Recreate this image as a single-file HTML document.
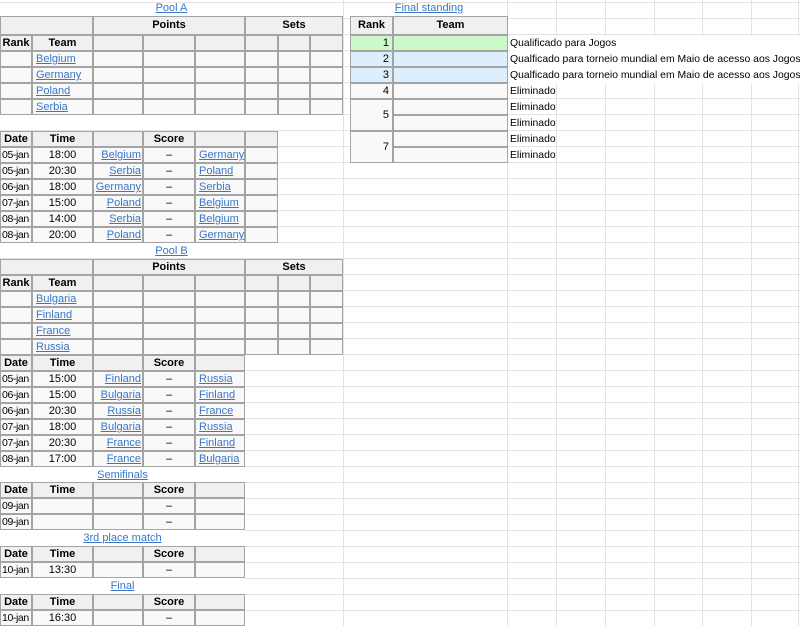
<!DOCTYPE html>
<html><head><meta charset="utf-8"><style>
body{margin:0;width:800px;height:626px;position:relative;overflow:hidden;background-color:#fff;
background-image:repeating-linear-gradient(to bottom,transparent 0,transparent 2px,#e3e3e3 2px,#e3e3e3 3px,transparent 3px,transparent 16px),
linear-gradient(to right,transparent 343px,#e3e3e3 343px,#e3e3e3 344px,transparent 344px,transparent 507px,#e3e3e3 507px,#e3e3e3 508px,transparent 508px,transparent 556px,#e3e3e3 556px,#e3e3e3 557px,transparent 557px,transparent 605px,#e3e3e3 605px,#e3e3e3 606px,transparent 606px,transparent 654px,#e3e3e3 654px,#e3e3e3 655px,transparent 655px,transparent 702px,#e3e3e3 702px,#e3e3e3 703px,transparent 703px,transparent 751px,#e3e3e3 751px,#e3e3e3 752px,transparent 752px,transparent 798px,#e3e3e3 798px,#e3e3e3 799px,transparent 799px);
font-family:"Liberation Sans",Arial,sans-serif;font-size:11px;color:#000}
div{position:absolute;box-sizing:border-box;white-space:nowrap;line-height:14px}
.c{border:1px solid #a4a4a4;background:#f9f9f9;padding:0 3px}
.h{background:#f0f0f0;font-weight:bold;text-align:center}
.t{text-align:center}
.r{text-align:right}
.d{padding:0 0 0 1px!important;letter-spacing:-0.4px;font-size:10.5px}
a{color:#3a76c8;text-decoration:underline}
.ti{text-align:center;height:16px;line-height:16px}
.n{font-family:"Liberation Sans",sans-serif;font-size:10.4px;left:510px;height:16px;line-height:16px;background:transparent}
</style></head><body>
<!-- Pool A -->
<div class="ti" style="left:0;top:0;width:343px"><a>Pool A</a></div>
<div class="c h" style="left:0;top:16px;width:93px;height:19px"></div>
<div class="c h" style="left:93px;top:16px;width:152px;height:19px;line-height:17px">Points</div>
<div class="c h" style="left:245px;top:16px;width:98px;height:19px;line-height:17px">Sets</div>
<div class="c h" style="left:0;top:35px;width:32px;height:16px;padding:0">Rank</div>
<div class="c h" style="left:32px;top:35px;width:61px;height:16px">Team</div>
<div class="c h" style="left:93px;top:35px;width:50px;height:16px"></div>
<div class="c h" style="left:143px;top:35px;width:52px;height:16px"></div>
<div class="c h" style="left:195px;top:35px;width:50px;height:16px"></div>
<div class="c h" style="left:245px;top:35px;width:33px;height:16px"></div>
<div class="c h" style="left:278px;top:35px;width:32px;height:16px"></div>
<div class="c h" style="left:310px;top:35px;width:33px;height:16px"></div>

<div class="c" style="left:0;top:51px;width:32px;height:16px"></div><div class="c" style="left:32px;top:51px;width:61px;height:16px"><a>Belgium</a></div><div class="c" style="left:93px;top:51px;width:50px;height:16px"></div><div class="c" style="left:143px;top:51px;width:52px;height:16px"></div><div class="c" style="left:195px;top:51px;width:50px;height:16px"></div><div class="c" style="left:245px;top:51px;width:33px;height:16px"></div><div class="c" style="left:278px;top:51px;width:32px;height:16px"></div><div class="c" style="left:310px;top:51px;width:33px;height:16px"></div>
<div class="c" style="left:0;top:67px;width:32px;height:16px"></div><div class="c" style="left:32px;top:67px;width:61px;height:16px"><a>Germany</a></div><div class="c" style="left:93px;top:67px;width:50px;height:16px"></div><div class="c" style="left:143px;top:67px;width:52px;height:16px"></div><div class="c" style="left:195px;top:67px;width:50px;height:16px"></div><div class="c" style="left:245px;top:67px;width:33px;height:16px"></div><div class="c" style="left:278px;top:67px;width:32px;height:16px"></div><div class="c" style="left:310px;top:67px;width:33px;height:16px"></div>
<div class="c" style="left:0;top:83px;width:32px;height:16px"></div><div class="c" style="left:32px;top:83px;width:61px;height:16px"><a>Poland</a></div><div class="c" style="left:93px;top:83px;width:50px;height:16px"></div><div class="c" style="left:143px;top:83px;width:52px;height:16px"></div><div class="c" style="left:195px;top:83px;width:50px;height:16px"></div><div class="c" style="left:245px;top:83px;width:33px;height:16px"></div><div class="c" style="left:278px;top:83px;width:32px;height:16px"></div><div class="c" style="left:310px;top:83px;width:33px;height:16px"></div>
<div class="c" style="left:0;top:99px;width:32px;height:16px"></div><div class="c" style="left:32px;top:99px;width:61px;height:16px"><a>Serbia</a></div><div class="c" style="left:93px;top:99px;width:50px;height:16px"></div><div class="c" style="left:143px;top:99px;width:52px;height:16px"></div><div class="c" style="left:195px;top:99px;width:50px;height:16px"></div><div class="c" style="left:245px;top:99px;width:33px;height:16px"></div><div class="c" style="left:278px;top:99px;width:32px;height:16px"></div><div class="c" style="left:310px;top:99px;width:33px;height:16px"></div>

<div class="c h" style="left:0;top:131px;width:32px;height:16px;padding:0">Date</div><div class="c h" style="left:32px;top:131px;width:61px;height:16px">Time</div><div class="c h" style="left:93px;top:131px;width:50px;height:16px"></div><div class="c h" style="left:143px;top:131px;width:52px;height:16px">Score</div><div class="c h" style="left:195px;top:131px;width:50px;height:16px"></div><div class="c h" style="left:245px;top:131px;width:33px;height:16px"></div>

<div class="c d" style="left:0;top:147px;width:32px;height:16px">05-jan</div><div class="c t" style="left:32px;top:147px;width:61px;height:16px">18:00</div><div class="c r" style="left:93px;top:147px;width:50px;height:16px;padding:0 1px"><a>Belgium</a></div><div class="c t" style="left:143px;top:147px;width:52px;height:16px">–</div><div class="c" style="left:195px;top:147px;width:50px;height:16px"><a>Germany</a></div><div class="c" style="left:245px;top:147px;width:33px;height:16px"></div>
<div class="c d" style="left:0;top:163px;width:32px;height:16px">05-jan</div><div class="c t" style="left:32px;top:163px;width:61px;height:16px">20:30</div><div class="c r" style="left:93px;top:163px;width:50px;height:16px;padding:0 1px"><a>Serbia</a></div><div class="c t" style="left:143px;top:163px;width:52px;height:16px">–</div><div class="c" style="left:195px;top:163px;width:50px;height:16px"><a>Poland</a></div><div class="c" style="left:245px;top:163px;width:33px;height:16px"></div>
<div class="c d" style="left:0;top:179px;width:32px;height:16px">06-jan</div><div class="c t" style="left:32px;top:179px;width:61px;height:16px">18:00</div><div class="c r" style="left:93px;top:179px;width:50px;height:16px;padding:0 1px"><a>Germany</a></div><div class="c t" style="left:143px;top:179px;width:52px;height:16px">–</div><div class="c" style="left:195px;top:179px;width:50px;height:16px"><a>Serbia</a></div><div class="c" style="left:245px;top:179px;width:33px;height:16px"></div>
<div class="c d" style="left:0;top:195px;width:32px;height:16px">07-jan</div><div class="c t" style="left:32px;top:195px;width:61px;height:16px">15:00</div><div class="c r" style="left:93px;top:195px;width:50px;height:16px;padding:0 1px"><a>Poland</a></div><div class="c t" style="left:143px;top:195px;width:52px;height:16px">–</div><div class="c" style="left:195px;top:195px;width:50px;height:16px"><a>Belgium</a></div><div class="c" style="left:245px;top:195px;width:33px;height:16px"></div>
<div class="c d" style="left:0;top:211px;width:32px;height:16px">08-jan</div><div class="c t" style="left:32px;top:211px;width:61px;height:16px">14:00</div><div class="c r" style="left:93px;top:211px;width:50px;height:16px;padding:0 1px"><a>Serbia</a></div><div class="c t" style="left:143px;top:211px;width:52px;height:16px">–</div><div class="c" style="left:195px;top:211px;width:50px;height:16px"><a>Belgium</a></div><div class="c" style="left:245px;top:211px;width:33px;height:16px"></div>
<div class="c d" style="left:0;top:227px;width:32px;height:16px">08-jan</div><div class="c t" style="left:32px;top:227px;width:61px;height:16px">20:00</div><div class="c r" style="left:93px;top:227px;width:50px;height:16px;padding:0 1px"><a>Poland</a></div><div class="c t" style="left:143px;top:227px;width:52px;height:16px">–</div><div class="c" style="left:195px;top:227px;width:50px;height:16px"><a>Germany</a></div><div class="c" style="left:245px;top:227px;width:33px;height:16px"></div>

<!-- Pool B -->
<div class="ti" style="left:0;top:243px;width:343px"><a>Pool B</a></div>
<div class="c h" style="left:0;top:259px;width:93px;height:16px"></div>
<div class="c h" style="left:93px;top:259px;width:152px;height:16px">Points</div>
<div class="c h" style="left:245px;top:259px;width:98px;height:16px">Sets</div>
<div class="c h" style="left:0;top:275px;width:32px;height:16px;padding:0">Rank</div>
<div class="c h" style="left:32px;top:275px;width:61px;height:16px">Team</div>
<div class="c h" style="left:93px;top:275px;width:50px;height:16px"></div>
<div class="c h" style="left:143px;top:275px;width:52px;height:16px"></div>
<div class="c h" style="left:195px;top:275px;width:50px;height:16px"></div>
<div class="c h" style="left:245px;top:275px;width:33px;height:16px"></div>
<div class="c h" style="left:278px;top:275px;width:32px;height:16px"></div>
<div class="c h" style="left:310px;top:275px;width:33px;height:16px"></div>
<div class="c" style="left:0;top:291px;width:32px;height:16px"></div><div class="c" style="left:32px;top:291px;width:61px;height:16px"><a>Bulgaria</a></div><div class="c" style="left:93px;top:291px;width:50px;height:16px"></div><div class="c" style="left:143px;top:291px;width:52px;height:16px"></div><div class="c" style="left:195px;top:291px;width:50px;height:16px"></div><div class="c" style="left:245px;top:291px;width:33px;height:16px"></div><div class="c" style="left:278px;top:291px;width:32px;height:16px"></div><div class="c" style="left:310px;top:291px;width:33px;height:16px"></div>
<div class="c" style="left:0;top:307px;width:32px;height:16px"></div><div class="c" style="left:32px;top:307px;width:61px;height:16px"><a>Finland</a></div><div class="c" style="left:93px;top:307px;width:50px;height:16px"></div><div class="c" style="left:143px;top:307px;width:52px;height:16px"></div><div class="c" style="left:195px;top:307px;width:50px;height:16px"></div><div class="c" style="left:245px;top:307px;width:33px;height:16px"></div><div class="c" style="left:278px;top:307px;width:32px;height:16px"></div><div class="c" style="left:310px;top:307px;width:33px;height:16px"></div>
<div class="c" style="left:0;top:323px;width:32px;height:16px"></div><div class="c" style="left:32px;top:323px;width:61px;height:16px"><a>France</a></div><div class="c" style="left:93px;top:323px;width:50px;height:16px"></div><div class="c" style="left:143px;top:323px;width:52px;height:16px"></div><div class="c" style="left:195px;top:323px;width:50px;height:16px"></div><div class="c" style="left:245px;top:323px;width:33px;height:16px"></div><div class="c" style="left:278px;top:323px;width:32px;height:16px"></div><div class="c" style="left:310px;top:323px;width:33px;height:16px"></div>
<div class="c" style="left:0;top:339px;width:32px;height:16px"></div><div class="c" style="left:32px;top:339px;width:61px;height:16px"><a>Russia</a></div><div class="c" style="left:93px;top:339px;width:50px;height:16px"></div><div class="c" style="left:143px;top:339px;width:52px;height:16px"></div><div class="c" style="left:195px;top:339px;width:50px;height:16px"></div><div class="c" style="left:245px;top:339px;width:33px;height:16px"></div><div class="c" style="left:278px;top:339px;width:32px;height:16px"></div><div class="c" style="left:310px;top:339px;width:33px;height:16px"></div>

<div class="c h" style="left:0;top:355px;width:32px;height:16px;padding:0">Date</div><div class="c h" style="left:32px;top:355px;width:61px;height:16px">Time</div><div class="c h" style="left:93px;top:355px;width:50px;height:16px"></div><div class="c h" style="left:143px;top:355px;width:52px;height:16px">Score</div><div class="c h" style="left:195px;top:355px;width:50px;height:16px"></div>
<div class="c d" style="left:0;top:371px;width:32px;height:16px">05-jan</div><div class="c t" style="left:32px;top:371px;width:61px;height:16px">15:00</div><div class="c r" style="left:93px;top:371px;width:50px;height:16px;padding:0 1px"><a>Finland</a></div><div class="c t" style="left:143px;top:371px;width:52px;height:16px">–</div><div class="c" style="left:195px;top:371px;width:50px;height:16px"><a>Russia</a></div>
<div class="c d" style="left:0;top:387px;width:32px;height:16px">06-jan</div><div class="c t" style="left:32px;top:387px;width:61px;height:16px">15:00</div><div class="c r" style="left:93px;top:387px;width:50px;height:16px;padding:0 1px"><a>Bulgaria</a></div><div class="c t" style="left:143px;top:387px;width:52px;height:16px">–</div><div class="c" style="left:195px;top:387px;width:50px;height:16px"><a>Finland</a></div>
<div class="c d" style="left:0;top:403px;width:32px;height:16px">06-jan</div><div class="c t" style="left:32px;top:403px;width:61px;height:16px">20:30</div><div class="c r" style="left:93px;top:403px;width:50px;height:16px;padding:0 1px"><a>Russia</a></div><div class="c t" style="left:143px;top:403px;width:52px;height:16px">–</div><div class="c" style="left:195px;top:403px;width:50px;height:16px"><a>France</a></div>
<div class="c d" style="left:0;top:419px;width:32px;height:16px">07-jan</div><div class="c t" style="left:32px;top:419px;width:61px;height:16px">18:00</div><div class="c r" style="left:93px;top:419px;width:50px;height:16px;padding:0 1px"><a>Bulgaria</a></div><div class="c t" style="left:143px;top:419px;width:52px;height:16px">–</div><div class="c" style="left:195px;top:419px;width:50px;height:16px"><a>Russia</a></div>
<div class="c d" style="left:0;top:435px;width:32px;height:16px">07-jan</div><div class="c t" style="left:32px;top:435px;width:61px;height:16px">20:30</div><div class="c r" style="left:93px;top:435px;width:50px;height:16px;padding:0 1px"><a>France</a></div><div class="c t" style="left:143px;top:435px;width:52px;height:16px">–</div><div class="c" style="left:195px;top:435px;width:50px;height:16px"><a>Finland</a></div>
<div class="c d" style="left:0;top:451px;width:32px;height:16px">08-jan</div><div class="c t" style="left:32px;top:451px;width:61px;height:16px">17:00</div><div class="c r" style="left:93px;top:451px;width:50px;height:16px;padding:0 1px"><a>France</a></div><div class="c t" style="left:143px;top:451px;width:52px;height:16px">–</div><div class="c" style="left:195px;top:451px;width:50px;height:16px"><a>Bulgaria</a></div>

<!-- Semifinals -->
<div class="ti" style="left:0;top:467px;width:245px;background:#fff"><a>Semifinals</a></div>
<div class="c h" style="left:0;top:482px;width:32px;height:16px;padding:0">Date</div><div class="c h" style="left:32px;top:482px;width:61px;height:16px">Time</div><div class="c h" style="left:93px;top:482px;width:50px;height:16px"></div><div class="c h" style="left:143px;top:482px;width:52px;height:16px">Score</div><div class="c h" style="left:195px;top:482px;width:50px;height:16px"></div>
<div class="c d" style="left:0;top:498px;width:32px;height:16px">09-jan</div><div class="c" style="left:32px;top:498px;width:61px;height:16px"></div><div class="c" style="left:93px;top:498px;width:50px;height:16px"></div><div class="c t" style="left:143px;top:498px;width:52px;height:16px">–</div><div class="c" style="left:195px;top:498px;width:50px;height:16px"></div>
<div class="c d" style="left:0;top:514px;width:32px;height:16px">09-jan</div><div class="c" style="left:32px;top:514px;width:61px;height:16px"></div><div class="c" style="left:93px;top:514px;width:50px;height:16px"></div><div class="c t" style="left:143px;top:514px;width:52px;height:16px">–</div><div class="c" style="left:195px;top:514px;width:50px;height:16px"></div>

<div class="ti" style="left:0;top:530px;width:245px;background:#fff"><a>3rd place match</a></div>
<div class="c h" style="left:0;top:546px;width:32px;height:16px;padding:0">Date</div><div class="c h" style="left:32px;top:546px;width:61px;height:16px">Time</div><div class="c h" style="left:93px;top:546px;width:50px;height:16px"></div><div class="c h" style="left:143px;top:546px;width:52px;height:16px">Score</div><div class="c h" style="left:195px;top:546px;width:50px;height:16px"></div>
<div class="c d" style="left:0;top:562px;width:32px;height:16px">10-jan</div><div class="c t" style="left:32px;top:562px;width:61px;height:16px">13:30</div><div class="c" style="left:93px;top:562px;width:50px;height:16px"></div><div class="c t" style="left:143px;top:562px;width:52px;height:16px">–</div><div class="c" style="left:195px;top:562px;width:50px;height:16px"></div>

<div class="ti" style="left:0;top:578px;width:245px;background:#fff"><a>Final</a></div>
<div class="c h" style="left:0;top:594px;width:32px;height:16px;padding:0">Date</div><div class="c h" style="left:32px;top:594px;width:61px;height:16px">Time</div><div class="c h" style="left:93px;top:594px;width:50px;height:16px"></div><div class="c h" style="left:143px;top:594px;width:52px;height:16px">Score</div><div class="c h" style="left:195px;top:594px;width:50px;height:16px"></div>
<div class="c d" style="left:0;top:610px;width:32px;height:16px">10-jan</div><div class="c t" style="left:32px;top:610px;width:61px;height:16px">16:30</div><div class="c" style="left:93px;top:610px;width:50px;height:16px"></div><div class="c t" style="left:143px;top:610px;width:52px;height:16px">–</div><div class="c" style="left:195px;top:610px;width:50px;height:16px"></div>

<!-- Final standing -->
<div class="ti" style="left:350px;top:0;width:158px"><a>Final standing</a></div>
<div class="c h" style="left:350px;top:16px;width:43px;height:19px;line-height:17px">Rank</div>
<div class="c h" style="left:393px;top:16px;width:115px;height:19px;line-height:17px">Team</div>
<div class="c r" style="left:350px;top:35px;width:43px;height:16px;background:#ccf9c9">1</div><div class="c" style="left:393px;top:35px;width:115px;height:16px;background:#ccf9c9"></div>
<div class="c r" style="left:350px;top:51px;width:43px;height:16px;background:#ddeefd">2</div><div class="c" style="left:393px;top:51px;width:115px;height:16px;background:#ddeefd"></div>
<div class="c r" style="left:350px;top:67px;width:43px;height:16px;background:#ddeefd">3</div><div class="c" style="left:393px;top:67px;width:115px;height:16px;background:#ddeefd"></div>
<div class="c r" style="left:350px;top:83px;width:43px;height:16px">4</div><div class="c" style="left:393px;top:83px;width:115px;height:16px"></div>
<div class="c r" style="left:350px;top:99px;width:43px;height:32px;line-height:30px">5</div><div class="c" style="left:393px;top:99px;width:115px;height:16px"></div><div class="c" style="left:393px;top:115px;width:115px;height:16px"></div>
<div class="c r" style="left:350px;top:131px;width:43px;height:32px;line-height:30px">7</div><div class="c" style="left:393px;top:131px;width:115px;height:16px"></div><div class="c" style="left:393px;top:147px;width:115px;height:16px"></div>
<div class="n" style="top:36px;background:#fff;width:290px">Qualificado para Jogos</div>
<div class="n" style="top:52px;background:#fff;width:290px">Qualficado para torneio mundial em Maio de acesso aos Jogos</div>
<div class="n" style="top:68px;background:#fff;width:290px">Qualficado para torneio mundial em Maio de acesso aos Jogos</div>
<div class="n" style="top:84px">Eliminado</div>
<div class="n" style="top:100px">Eliminado</div>
<div class="n" style="top:116px">Eliminado</div>
<div class="n" style="top:132px">Eliminado</div>
<div class="n" style="top:148px">Eliminado</div>
</body></html>
